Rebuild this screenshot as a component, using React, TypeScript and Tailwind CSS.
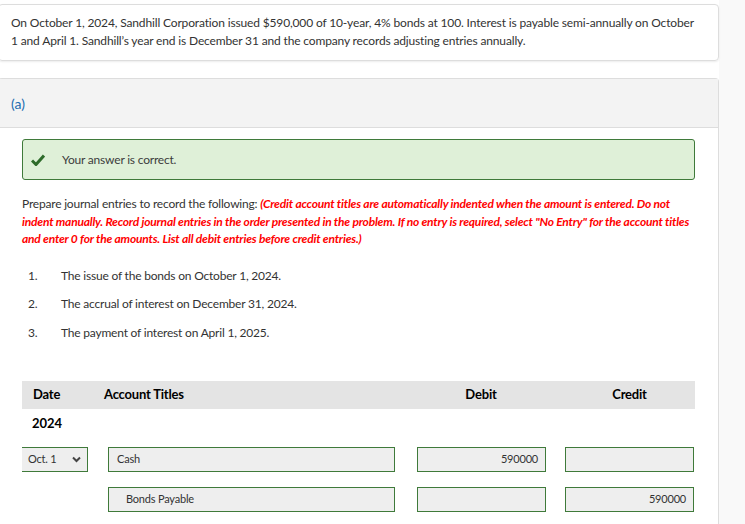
import React from "react";

const Field = ({ value, align = "left", indent = false, w }: { value?: string; align?: "left" | "right"; indent?: boolean; w: string }) => (
  <div
    className={`${w} h-[25px] border border-[#3f7a3a] bg-[#eeeeee] flex items-center text-[11px] text-[#333] tracking-[-0.2px] ${
      align === "right" ? "justify-end pr-[7px]" : indent ? "pl-[17px]" : "pl-[8px]"
    }`}
  >
    {value}
  </div>
);

export default function App() {
  const items = [
    "The issue of the bonds on October 1, 2024.",
    "The accrual of interest on December 31, 2024.",
    "The payment of interest on April 1, 2025.",
  ];

  return (
    <div className="w-[745px] h-[524px] overflow-hidden flex bg-[#f9f9f9] font-['Lato',sans-serif] text-[#333]">
      <div className="w-[719px] shrink-0 bg-white flex flex-col">
        <div className="mt-[4px] border border-[#dddddd] rounded-[4px] shadow-[0_1px_2px_rgba(0,0,0,0.08)] -ml-[2px] pl-[12px] pr-[16px] pt-[9px] h-[57px] text-[12px] leading-[17.5px] tracking-[-0.15px]">
          On October 1, 2024, Sandhill Corporation issued $590,000 of 10-year, 4% bonds at 100. Interest is payable semi-annually on October 1 and April 1. Sandhill’s year end is December 31 and the company records adjusting entries annually.
        </div>

        <div className="mt-[17px] flex-1 border border-b-0 border-[#dddddd] rounded-t-[4px] -ml-[2px]">
          <div className="h-[49px] bg-[#f3f3f3] border-b border-[#dddddd] flex items-center pl-[12px] text-[14px] text-[#1b6cb0]">
            (a)
          </div>

          <div className="pl-[23px] pr-[23px]">
            <div className="mt-[11px] h-[41px] rounded-[3px] border border-[#3f7a3a] bg-[#dff0d8] flex items-center pl-[8px] text-[12px] text-[#3c3c3c] tracking-[-0.2px]">
              <svg width="14" height="12" viewBox="0 0 14 12" className="mr-[17px]">
                <path d="M1 6.5 L5 10.5 L13 1.5" fill="none" stroke="#2e6b2a" strokeWidth="3" />
              </svg>
              Your answer is correct.
            </div>

            <p className="mt-[15px] text-[12px] leading-[17.5px] tracking-[-0.2px]">
              Prepare journal entries to record the following:{" "}
              <span className="text-[#ff0000] italic font-bold">
                (Credit account titles are automatically indented when the amount is entered. Do not indent manually. Record journal entries in the order presented in the problem. If no entry is required, select "No Entry" for the account titles and enter 0 for the amounts. List all debit entries before credit entries.)
              </span>
            </p>

            <div className="mt-[19px] flex flex-col gap-[10.5px] text-[12px] leading-[18px] tracking-[-0.2px]">
              {items.map((t, i) => (
                <div key={i} className="flex">
                  <span className="w-[39px] pl-[6px]">{i + 1}.</span>
                  <span>{t}</span>
                </div>
              ))}
            </div>

            <div className="mt-[39px] h-[28px] bg-[#e4e4e4] flex items-center text-[13px] font-bold text-black tracking-[-0.2px]">
              <span className="w-[82px] pl-[11px]">Date</span>
              <span className="w-[313px]">Account Titles</span>
              <span className="w-[128px] text-center">Debit</span>
              <span className="w-[20px]" />
              <span className="w-[129px] text-center">Credit</span>
            </div>

            <div className="h-[31px] flex items-center pl-[10px] text-[13px] font-bold text-black">2024</div>

            <div className="mt-[7px] flex items-center">
              <div className="w-[66px] h-[25px] border border-l-0 border-[#3f7a3a] bg-[#eeeeee] flex items-center justify-between pl-[6px] pr-[6px] text-[11px] text-[#333] tracking-[-0.2px]">
                <span>Oct. 1</span>
                <svg width="9" height="7" viewBox="0 0 9 7">
                  <path d="M1 1.5 L4.5 5 L8 1.5" fill="none" stroke="#444" strokeWidth="2" />
                </svg>
              </div>
              <div className="ml-[20px]">
                <Field w="w-[287px]" value="Cash" />
              </div>
              <div className="ml-[22px]">
                <Field w="w-[129px]" value="590000" align="right" />
              </div>
              <div className="ml-[19px]">
                <Field w="w-[129px]" />
              </div>
            </div>

            <div className="mt-[15px] flex items-center">
              <div className="ml-[86px]">
                <Field w="w-[287px]" value="Bonds Payable" indent />
              </div>
              <div className="ml-[22px]">
                <Field w="w-[129px]" />
              </div>
              <div className="ml-[19px]">
                <Field w="w-[129px]" value="590000" align="right" />
              </div>
            </div>
          </div>
        </div>
      </div>
      <div className="flex-1" />
    </div>
  );
}
